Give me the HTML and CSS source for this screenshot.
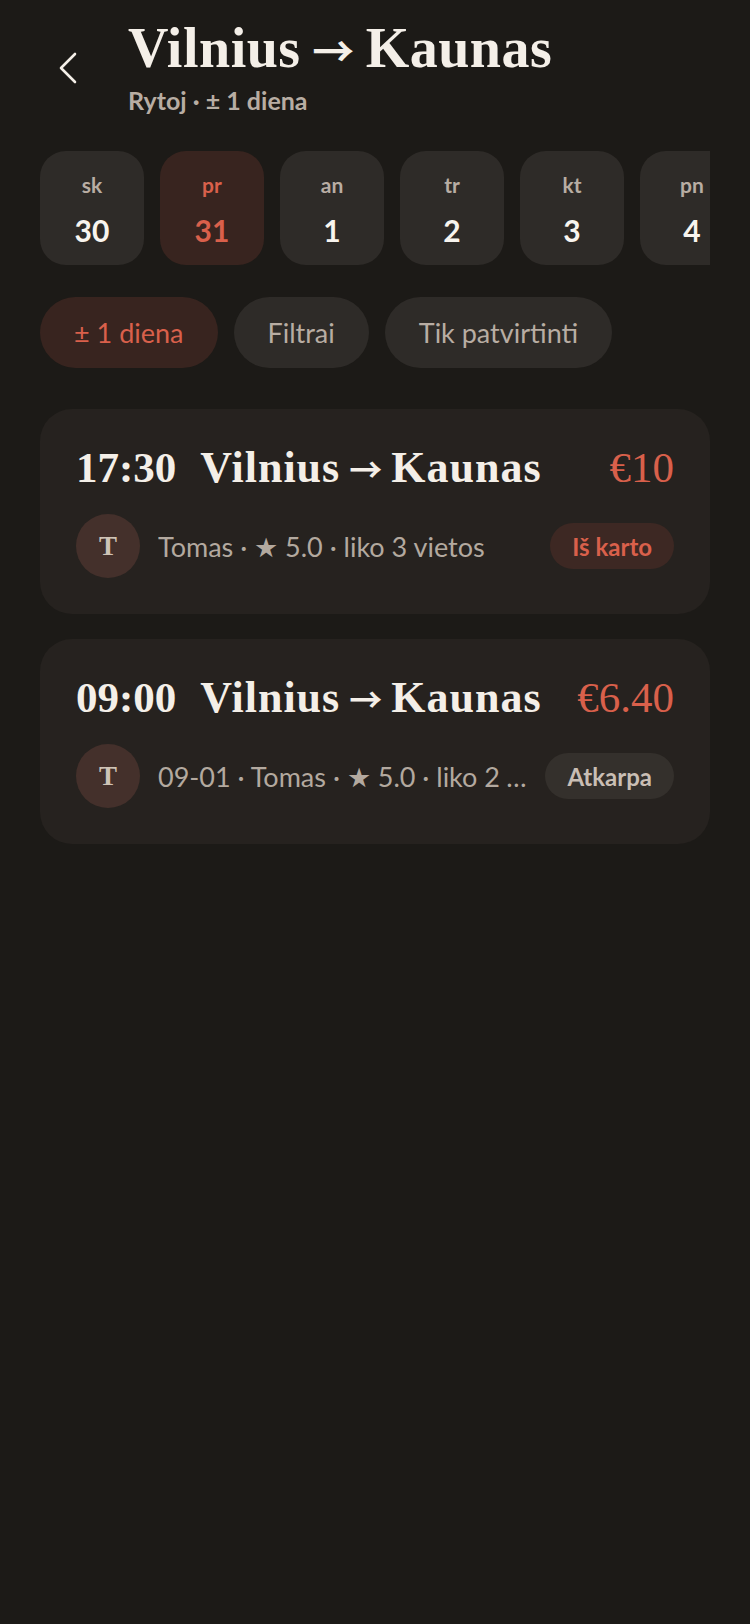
FILE: index.html
```html
<!DOCTYPE html>
<html lang="lt">
<head>
    <meta charset="UTF-8">
    <meta name="viewport" content="width=device-width, initial-scale=1.0">
    <title>Paieška</title>
    <link rel="stylesheet" href="styles.css">
</head>
<body>
    <div class="page">
        <header class="antraste">
            <button class="atgal" aria-label="Atgal">
                <svg width="20" height="32" viewBox="0 0 20 32">
                    <polyline points="17,2 3,16 17,30" fill="none" stroke="#f4efe8" stroke-width="2.6" stroke-linecap="round" stroke-linejoin="round"/>
                </svg>
            </button>
            <div class="antraste-tekstas">
                <h1>Vilnius <span class="rodykle">→</span> Kaunas</h1>
                <p class="poantraste">Rytoj · ± 1 diena</p>
            </div>
        </header>

        <div class="dienos">
            <div class="diena"><span class="savaites-d">sk</span><span class="skaicius">30</span></div>
            <div class="diena aktyvi"><span class="savaites-d">pr</span><span class="skaicius">31</span></div>
            <div class="diena"><span class="savaites-d">an</span><span class="skaicius">1</span></div>
            <div class="diena"><span class="savaites-d">tr</span><span class="skaicius">2</span></div>
            <div class="diena"><span class="savaites-d">kt</span><span class="skaicius">3</span></div>
            <div class="diena"><span class="savaites-d">pn</span><span class="skaicius">4</span></div>
            <div class="diena"><span class="savaites-d">št</span><span class="skaicius">5</span></div>
        </div>

        <div class="filtrai">
            <button class="filtras aktyvus">± 1 diena</button>
            <button class="filtras">Filtrai</button>
            <button class="filtras">Tik patvirtinti</button>
        </div>

        <section class="keliones">
            <div class="kortele">
                <div class="kortele-virsus">
                    <span class="laikas">17:30</span>
                    <span class="marsrutas">Vilnius <span class="rodykle">→</span> Kaunas</span>
                    <span class="kaina">€10</span>
                </div>
                <div class="kortele-apacia">
                    <div class="avataras">T</div>
                    <p class="info">Tomas · ★ 5.0 · liko 3 vietos</p>
                    <span class="zyma raudona">Iš karto</span>
                </div>
            </div>

            <div class="kortele">
                <div class="kortele-virsus">
                    <span class="laikas">09:00</span>
                    <span class="marsrutas">Vilnius <span class="rodykle">→</span> Kaunas</span>
                    <span class="kaina">€6.40</span>
                </div>
                <div class="kortele-apacia">
                    <div class="avataras">T</div>
                    <p class="info">09-01 · Tomas · ★ 5.0 · liko 2 vietos</p>
                    <span class="zyma">Atkarpa</span>
                </div>
            </div>
        </section>
    </div>
</body>
</html>
```

FILE: styles.css
```css
body {
    margin: 0;
    background-color: #1c1a17;
    color: #f4efe8;
    font-family: Lato, 'Noto Sans', sans-serif;
    min-height: 100vh;
}

.page {
    padding: 18px 40px;
}

.antraste {
    display: flex;
    align-items: flex-start;
    gap: 32px;
}

.atgal {
    width: 56px;
    height: 56px;
    margin-top: 22px;
    background: none;
    border: none;
    padding: 0;
    display: flex;
    align-items: center;
    justify-content: center;
    cursor: pointer;
}

h1 {
    font-family: 'Liberation Serif', serif;
    font-weight: 700;
    font-size: 56px;
    line-height: 60px;
    letter-spacing: 0.5px;
    margin: 0;
    color: #f4efe8;
}

.rodykle {
    font-family: 'Noto Sans CJK JP', 'DejaVu Sans', sans-serif;
    font-weight: 700;
    font-size: 0.75em;
    letter-spacing: 0;
    margin: 0 -3px;
}

.poantraste {
    margin: 7px 0 0;
    font-size: 25px;
    line-height: 28px;
    font-weight: 700;
    color: #b8ada3;
}

.dienos {
    display: flex;
    gap: 16px;
    margin-top: 37px;
    overflow: hidden;
}

.diena {
    flex: 0 0 104px;
    height: 114px;
    border-radius: 26px;
    background-color: #2e2b28;
    display: flex;
    flex-direction: column;
    align-items: center;
    justify-content: center;
    gap: 15px;
    padding-top: 2px;
    box-sizing: border-box;
}

.savaites-d {
    font-size: 21px;
    line-height: 26px;
    font-weight: 700;
    color: #b8ada3;
}

.skaicius {
    font-size: 30px;
    line-height: 34px;
    font-weight: 700;
    color: #f8f4ee;
}

.diena.aktyvi {
    background-color: #38241f;
}

.diena.aktyvi .savaites-d,
.diena.aktyvi .skaicius {
    color: #d9604b;
}

.filtrai {
    display: flex;
    gap: 16px;
    margin-top: 32px;
}

.filtras {
    height: 71px;
    padding: 0 34px;
    border: none;
    border-radius: 36px;
    background-color: #2e2b28;
    color: #b8ada3;
    font-family: Lato, 'Noto Sans', sans-serif;
    font-size: 27px;
}

.filtras.aktyvus {
    background-color: #38241f;
    color: #d9604b;
}

.keliones {
    display: flex;
    flex-direction: column;
    gap: 25px;
    margin-top: 41px;
}

.kortele {
    background-color: #26221f;
    border-radius: 32px;
    padding: 35px 36px 36px;
}

.kortele-virsus {
    display: flex;
    align-items: baseline;
    gap: 24px;
    font-family: 'Liberation Serif', serif;
    font-size: 43px;
    line-height: 48px;
}

.laikas,
.marsrutas {
    font-weight: 700;
    color: #f4efe8;
}

.marsrutas {
    font-size: 44px;
    letter-spacing: 1px;
}

.kaina {
    margin-left: auto;
    color: #d9604b;
}

.kortele-apacia {
    display: flex;
    align-items: center;
    gap: 18px;
    margin-top: 22px;
}

.avataras {
    flex: 0 0 64px;
    height: 64px;
    border-radius: 50%;
    background-color: #44302b;
    color: #cfc3b6;
    font-family: 'Liberation Serif', serif;
    font-weight: 700;
    font-size: 27px;
    display: flex;
    align-items: center;
    justify-content: center;
}

.info {
    flex: 1;
    min-width: 0;
    margin: 0;
    font-size: 27px;
    color: #b3a99f;
    white-space: nowrap;
    overflow: hidden;
    text-overflow: ellipsis;
}

.zyma {
    height: 46px;
    padding: 0 22px;
    border-radius: 23px;
    background-color: #34302c;
    color: #c9beb4;
    font-size: 24px;
    font-weight: 700;
    display: flex;
    align-items: center;
}

.zyma.raudona {
    background-color: #3d2823;
    color: #d9604b;
}
```
